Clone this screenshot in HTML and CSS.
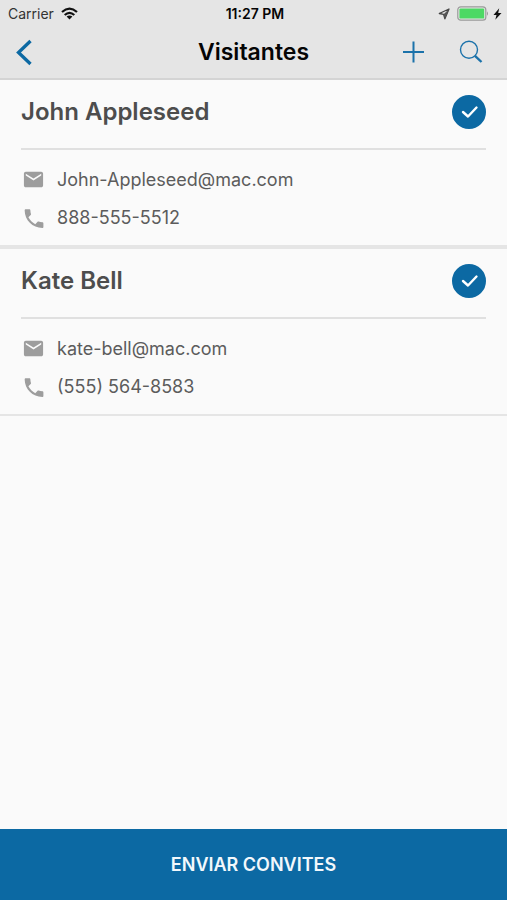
FILE: index.html
```html
<!DOCTYPE html>
<html lang="pt">
<head>
<meta charset="utf-8">
<meta name="viewport" content="width=device-width, initial-scale=1">
<title>Visitantes</title>
<link rel="stylesheet" href="styles.css">
</head>
<body>
<svg class="symbols" aria-hidden="true">
  <symbol id="mail" viewBox="0 0 24 24"><path d="M19.400 4.500H4.600c-1 0-1.800.8-1.800 1.800v11.400c0 1 .8 1.800 1.800 1.800h14.800c1 0 1.800-.8 1.800-1.800V6.300c0-1-.8-1.800-1.800-1.800zm0 3.700L12 12.900 4.600 8.200V6.500l7.400 4.600 7.400-4.600z"/></symbol>
  <symbol id="phone" viewBox="0 0 24 24"><path transform="translate(.5 1)" d="M6.620 10.790c1.440 2.830 3.760 5.140 6.590 6.590l2.200-2.200c.27-.27.67-.36 1.020-.24 1.120.37 2.330.57 3.570.57.55 0 1 .45 1 1V20c0 .55-.45 1-1 1-9.390 0-17-7.610-17-17 0-.55.45-1 1-1h3.500c.55 0 1 .45 1 1 0 1.250.2 2.450.57 3.570.11.35.03.74-.25 1.020l-2.200 2.200z"/></symbol>
</svg>
<div class="app">
  <header class="top">
    <div class="status">
      <div class="status-left">
        <span class="carrier">Carrier</span>
        <svg width="17" height="13" viewBox="0 0 17 13" aria-hidden="true"><g fill="none" stroke="#111" stroke-width="2.200"><path d="M1 5Q8.500-1.800 16 5"/><path d="M3.700 8Q8.500 3.600 13.300 8"/></g><path d="M5.600 9.600Q8.500 7.200 11.400 9.600L8.500 12.600z" fill="#111"/></svg>
      </div>
      <time class="time">11:27 PM</time>
      <div class="status-right">
        <svg width="12" height="12" viewBox="0 0 12 12" aria-hidden="true"><path d="M11 1L1.300 5.500 5.600 6.300 6.900 10.800z" fill="none" stroke="#444" stroke-width="1.300" stroke-linejoin="round"/><path d="M11 1L5.600 6.300 6.900 10.800z" fill="#555"/></svg>
        <svg width="32" height="15" viewBox="0 0 32 15" aria-hidden="true"><rect x=".8" y=".8" width="28" height="13.400" rx="3" fill="#e8e8e8" stroke="#999" stroke-width="1.200"/><rect x="2.400" y="2.400" width="24.800" height="10.200" rx="1.200" fill="#4cd964"/><path d="M30 5.200q2 2.300 0 4.600z" fill="#999"/></svg>
        <svg width="9" height="12" viewBox="0 0 9 12" aria-hidden="true"><path d="M6.200.3L.5 6.900h3L2.300 11.800 8.500 4.900H5.200z" fill="#111"/></svg>
      </div>
    </div>
    <nav class="nav">
      <div class="nav-side">
        <button class="icon-button" type="button" aria-label="Voltar"><svg width="24" height="28" viewBox="0 0 24 28"><path d="M18.500 3L6.500 14.500 18.500 26" fill="none" stroke="#0c69a3" stroke-width="3.300"/></svg></button>
      </div>
      <h1 class="title">Visitantes</h1>
      <div class="nav-side nav-actions">
        <button class="icon-button" type="button" aria-label="Adicionar"><svg width="24" height="24" viewBox="0 0 24 24"><path d="M12.500 1.500v21M2 12h21" stroke="#1b72aa" stroke-width="2"/></svg></button>
        <button class="icon-button" type="button" aria-label="Buscar"><svg width="24" height="24" viewBox="0 0 24 24"><circle cx="10" cy="9.800" r="8.500" fill="none" stroke="#1b72aa" stroke-width="1.400"/><path d="M16 15.800l6.500 6.200" stroke="#1b72aa" stroke-width="2.400"/></svg></button>
      </div>
    </nav>
  </header>
  <main class="list">
    <section class="card">
      <div class="card-head">
        <h2 class="name"><label for="john">John Appleseed</label></h2>
        <span class="check"><input id="john" type="checkbox" checked><svg viewBox="0 0 34 34" aria-hidden="true"><path d="M11 17l5 4.500 8.500-9"/></svg></span>
      </div>
      <div class="contact"><svg class="glyph" aria-hidden="true"><use href="#mail"/></svg><span>John-Appleseed@mac.com</span></div>
      <div class="contact"><svg class="glyph" aria-hidden="true"><use href="#phone"/></svg><span>888-555-5512</span></div>
    </section>
    <section class="card">
      <div class="card-head">
        <h2 class="name"><label for="kate">Kate Bell</label></h2>
        <span class="check"><input id="kate" type="checkbox" checked><svg viewBox="0 0 34 34" aria-hidden="true"><path d="M11 17l5 4.500 8.500-9"/></svg></span>
      </div>
      <div class="contact"><svg class="glyph" aria-hidden="true"><use href="#mail"/></svg><span>kate-bell@mac.com</span></div>
      <div class="contact"><svg class="glyph" aria-hidden="true"><use href="#phone"/></svg><span>(555) 564-8583</span></div>
    </section>
  </main>
  <button class="send" type="button">ENVIAR CONVITES</button>
</div>
</body>
</html>
```
FILE: styles.css
```css
* { box-sizing: border-box; }

body {
  margin: 0;
  background: #fafafa;
  color: #5c5c5c;
  font-family: Inter, "Liberation Sans", sans-serif;
}

button {
  border: 0;
  padding: 0;
  font-family: inherit;
}

svg { display: block; flex: none; }

.symbols { position: absolute; width: 0; height: 0; }

.app {
  display: flex;
  flex-direction: column;
  min-height: 100vh;
}

.top {
  background: #e5e5e5;
  border-bottom: 2px solid #d4d4d4;
  color: #050505;
}

.status {
  display: grid;
  grid-template-columns: 1fr auto 1fr;
  align-items: center;
  height: 27px;
  padding: 0 5px 0 8px;
  font-size: 14px;
}

.status-left, .status-right {
  display: flex;
  align-items: center;
  gap: 7px;
}

.carrier { color: #333; }

.status-right {
  justify-content: flex-end;
  gap: 4px;
}

.status-right svg:first-child { margin-right: 3px; }

.time { font-weight: 600; }

.nav {
  display: grid;
  grid-template-columns: 1fr auto 1fr;
  align-items: center;
  height: 51px;
  padding: 0 12px 1px;
}

.nav-side { display: flex; }

.nav-actions {
  justify-content: flex-end;
  gap: 34px;
  padding-right: 12px;
}

.icon-button { background: none; }

.title {
  margin: 0;
  font-size: 23px;
  font-weight: 600;
  line-height: 28px;
}

.list { flex: 1; }

.card {
  padding: 0 21px 9px;
  border-bottom: 4px solid #e5e5e5;
}

.card:last-child { border-bottom-width: 2px; }

.card-head {
  display: flex;
  align-items: center;
  justify-content: space-between;
  padding: 15px 0 19px;
  margin-bottom: 10px;
  border-bottom: 2px solid #e0e0e0;
}

.name {
  margin: 0;
  color: #4d4d4d;
  font-size: 24px;
  font-weight: 600;
  line-height: 34px;
}

.check { display: grid; }

.check input, .check svg {
  grid-area: 1 / 1;
  width: 34px;
  height: 34px;
  margin: 0;
}

.check input {
  appearance: none;
  border: 2px solid #0c69a3;
  border-radius: 50%;
}

.check input:checked { background: #0c69a3; }

.check svg {
  fill: none;
  stroke: #fff;
  stroke-width: 2.400;
  stroke-linecap: round;
  stroke-linejoin: round;
  pointer-events: none;
}

.contact {
  display: flex;
  align-items: center;
  gap: 11px;
  height: 38px;
  font-size: 18px;
}

.glyph {
  width: 25px;
  height: 25px;
  fill: #9d9d9d;
}

.send {
  height: 71px;
  background: #0c69a3;
  color: #f2f8fc;
  font-size: 18px;
  font-weight: 600;
}
```
